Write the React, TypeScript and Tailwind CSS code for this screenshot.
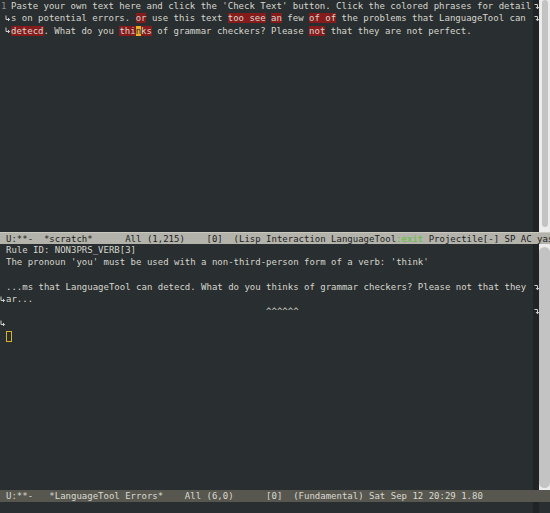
import React from 'react';

const mono = "font-['DejaVu_Sans_Mono',monospace] text-[9px] leading-[12.3px]";

const RightArrow = () => (
  <svg width="5" height="7" viewBox="0 0 5 7" className="block">
    <path d="M0.5 1.5 H3.5 V5.5 M2 4 L3.5 5.8 L5 4" fill="none" stroke="#cfcfc7" strokeWidth="1" />
  </svg>
);

const LeftArrow = () => (
  <svg width="5" height="7" viewBox="0 0 5 7" className="block">
    <path d="M1 0.5 V4.5 H4.5 M3 3 L4.6 4.5 L3 6" fill="none" stroke="#cfcfc7" strokeWidth="1" />
  </svg>
);

const Err = ({ children }: { children: React.ReactNode }) => (
  <span className="bg-[#861b1c]">{children}</span>
);

// one row of the fringe column, with or without an arrow
const FringeCell = ({ arrow, side }: { arrow?: boolean; side: 'l' | 'r' }) => (
  <div className="h-[12.3px] flex items-center">
    {arrow ? side === 'l' ? <LeftArrow /> : <RightArrow /> : null}
  </div>
);

const Scrollbar = ({ thumbClass }: { thumbClass: string }) => (
  <div className="w-[11px] bg-[#ececec] flex justify-center pt-0">
    <div className={`w-[6px] bg-[#c3c3c3] rounded-full ${thumbClass}`} />
  </div>
);

export default function App() {
  return (
    <div className={`w-[550px] h-[513px] bg-[#292e30] text-[#d6d6ce] flex flex-col overflow-hidden ${mono}`}>
      {/* top window: *scratch* */}
      <div className="h-[232px] flex">
        <div className="w-[11px] flex flex-col">
          <div className="h-[12.3px] pl-[1px] text-[#8c8c86]">1</div>
          <div className="pl-[5px]"><FringeCell arrow side="l" /></div>
          <div className="pl-[5px]"><FringeCell arrow side="l" /></div>
        </div>
        <div className="w-[522px] flex flex-col whitespace-pre">
          <div>Paste your own text here and click the 'Check Text' button. Click the colored phrases for detail</div>
          <div>
            s on potential errors. <Err>or</Err> use this text <Err>too see</Err> <Err>an</Err> few <Err>of of</Err> the problems that LanguageTool can{' '}
          </div>
          <div>
            <Err>detecd</Err>. What do you <Err>thi</Err>
            <span className="bg-[#e3b32a] text-[#1d1d1d]">n</span>
            <Err>ks</Err> of grammar checkers? Please <Err>not</Err> that they are not perfect.
          </div>
        </div>
        <div className="w-[6px] bg-[#202426] flex flex-col pl-[1px]">
          <FringeCell arrow side="r" />
          <FringeCell arrow side="r" />
        </div>
        <Scrollbar thumbClass="h-[227px]" />
      </div>

      {/* top mode line (active) */}
      <div className="h-[12px] bg-[#b3b3ab] text-[#1c1c1c] whitespace-pre pl-[6px] leading-[12px] border-t border-[#c9c9c1]">
        {'U:**-  *scratch*      All (1,215)    [0]  (Lisp Interaction LanguageTool'}
        <span className="text-[#5cc234]">:exit</span>
        {' Projectile[-] SP AC yas'}
      </div>

      {/* bottom window: *LanguageTool Errors* */}
      <div className="flex-1 flex">
        <div className="w-[6px] flex flex-col">
          <FringeCell />
          <FringeCell />
          <FringeCell />
          <FringeCell />
          <FringeCell arrow side="l" />
          <FringeCell />
          <FringeCell arrow side="l" />
        </div>
        <div className="w-[527px] flex flex-col whitespace-pre">
          <div className="h-[12.3px]">Rule ID: NON3PRS_VERB[3]</div>
          <div className="h-[12.3px]">The pronoun 'you' must be used with a non-third-person form of a verb: 'think'</div>
          <div className="h-[12.3px]" />
          <div className="h-[12.3px]">...ms that LanguageTool can detecd. What do you thinks of grammar checkers? Please not that they </div>
          <div className="h-[12.3px]">ar...</div>
          <div className="h-[12.3px]">{'                                                ^^^^^^'}</div>
          <div className="h-[12.3px]" />
          <div className="h-[12.3px] flex items-center">
            <div className="w-[6px] h-[11px] border border-[#d9b22c]" />
          </div>
        </div>
        <div className="w-[6px] bg-[#202426] flex flex-col pl-[1px]">
          <FringeCell />
          <FringeCell />
          <FringeCell />
          <FringeCell arrow side="r" />
          <FringeCell />
          <FringeCell arrow side="r" />
        </div>
        <div className="w-[11px] bg-[#ececec] flex justify-center pt-[3px] pb-[2px]">
          <div className="w-[6px] flex-1 bg-[#c3c3c3] rounded-full" />
        </div>
      </div>

      {/* bottom mode line (inactive) */}
      <div className="h-[12px] bg-[#57574f] text-[#d9d9d1] whitespace-pre pl-[6px] leading-[12px]">
        {'U:**-   *LanguageTool Errors*    All (6,0)      [0]  (Fundamental) Sat Sep 12 20:29 1.80'}
      </div>

      {/* echo area */}
      <div className="h-[11px] flex">
        <div className="w-[533px]" />
        <div className="w-[6px] bg-[#202426]" />
      </div>
    </div>
  );
}
